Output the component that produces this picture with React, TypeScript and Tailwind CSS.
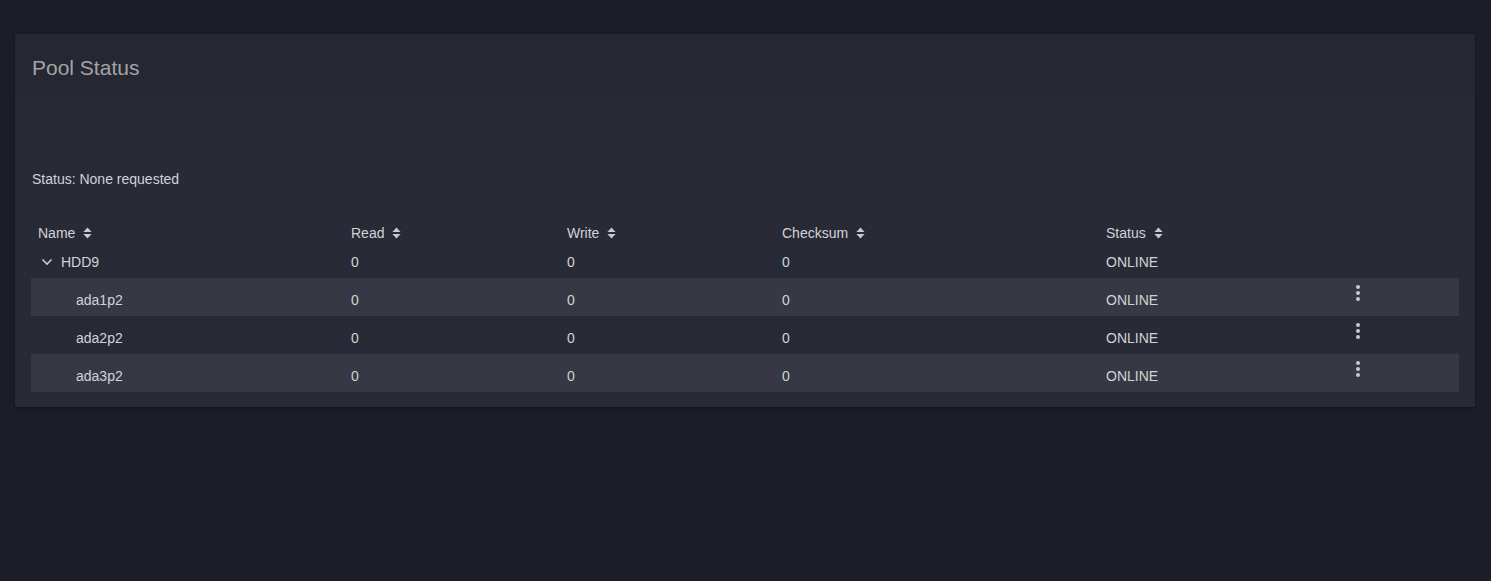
import React from "react"

type Device = {
  name: string
  read: number
  write: number
  checksum: number
  status: string
}

const disks: Device[] = [
  { name: "ada1p2", read: 0, write: 0, checksum: 0, status: "ONLINE" },
  { name: "ada2p2", read: 0, write: 0, checksum: 0, status: "ONLINE" },
  { name: "ada3p2", read: 0, write: 0, checksum: 0, status: "ONLINE" },
]

const cols = "grid grid-cols-[313px_216px_215px_324px_239px_1fr]"

function SortIcon() {
  return (
    <svg width="9" height="12" viewBox="0 0 9 12" className="ml-[8px] fill-[#c9cacf]">
      <path d="M4.5 0.5 L8.6 5 H0.4 Z" />
      <path d="M4.5 11.5 L8.6 7 H0.4 Z" />
    </svg>
  )
}

function Chevron() {
  return (
    <svg width="12" height="8" viewBox="0 0 12 8" className="mr-2 stroke-[#c9cacf]" fill="none">
      <path d="M1.5 1.5 L6 6 L10.5 1.5" strokeWidth="1.6" />
    </svg>
  )
}

function Kebab() {
  return (
    <svg width="24" height="24" viewBox="0 0 24 24" className="fill-[#c9cacf]">
      <circle cx="12" cy="6" r="2" />
      <circle cx="12" cy="12" r="2" />
      <circle cx="12" cy="18" r="2" />
    </svg>
  )
}

export default function App() {
  const headers = ["Name", "Read", "Write", "Checksum", "Status"]

  return (
    <div className="min-h-[581px] bg-[#1b1d28] pt-[34px] pl-[15px] pr-[16px] font-['Liberation_Sans',Arial,sans-serif] text-[14px] text-[#d2d3d6]">
      <div className="overflow-hidden rounded-[2px] bg-[#282a36] shadow-[0_1px_3px_rgba(0,0,0,0.35)]">
        <div className="flex h-[63px] items-center bg-[#252732] px-[17px] pt-[3px]">
          <h2 className="text-[21px] leading-none text-[#a3a4a6]">Pool Status</h2>
        </div>

        <div className="px-[16px] pt-[72px] pb-[15px]">
          <div className="pl-[1px] leading-[20px]">Status: None requested</div>

          <div className="mt-[29px]">
            <div className={`${cols} h-[30px] items-center`}>
              {headers.map((h) => (
                <div key={h} className="flex items-center pl-[7px]">
                  {h}
                  <SortIcon />
                </div>
              ))}
              <div />
            </div>

            <div className={`${cols} h-[30px] items-center pb-[2px]`}>
              <div className="flex items-center pl-[10px]">
                <Chevron />
                HDD9
              </div>
              <div className="pl-[7px]">0</div>
              <div className="pl-[7px]">0</div>
              <div className="pl-[7px]">0</div>
              <div className="pl-[7px]">ONLINE</div>
              <div />
            </div>

            {disks.map((d, i) => (
              <div
                key={d.name}
                className={`${cols} h-[38px] leading-[20px] ${i % 2 === 0 ? "bg-[#363843]" : ""}`}
              >
                <div className="pl-[45px] pt-[12px]">{d.name}</div>
                <div className="pl-[7px] pt-[12px]">{d.read}</div>
                <div className="pl-[7px] pt-[12px]">{d.write}</div>
                <div className="pl-[7px] pt-[12px]">{d.checksum}</div>
                <div className="pl-[7px] pt-[12px]">{d.status}</div>
                <div className="pl-[8px] pt-[3px]">
                  <Kebab />
                </div>
              </div>
            ))}
          </div>
        </div>
      </div>
    </div>
  )
}
